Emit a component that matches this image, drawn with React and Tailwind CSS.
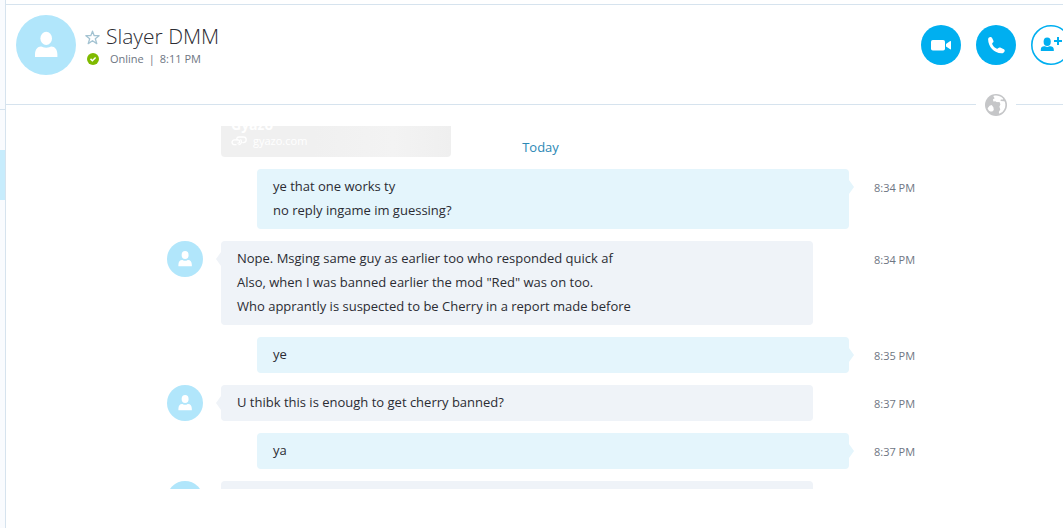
const MESSAGES = [
  { own: true, time: '8:34 PM', lines: ['ye that one works ty', 'no reply ingame im guessing?'] },
  {
    own: false,
    time: '8:34 PM',
    lines: [
      'Nope. Msging same guy as earlier too who responded quick af',
      'Also, when I was banned earlier the mod "Red" was on too.',
      'Who apprantly is suspected to be Cherry in a report made before',
    ],
  },
  { own: true, time: '8:35 PM', lines: ['ye'] },
  { own: false, time: '8:37 PM', lines: ['U thibk this is enough to get cherry banned?'] },
  { own: true, time: '8:37 PM', lines: ['ya'] },
  { own: false, time: '', lines: [''] },
];

function Avatar({ className }) {
  return (
    <svg viewBox="0 0 60 60" className={className} aria-hidden="true">
      <circle cx="30" cy="30" r="30" fill="#b1e6fb" />
      <ellipse cx="30.2" cy="23.4" rx="5.8" ry="6.6" fill="#fff" />
      <path d="M19 42v-2.500c0-5 2.500-8 6-8 1.500 0 2.500 1.300 5.200 1.300s3.700-1.300 5.200-1.300c3.500 0 6 3 6 8V42z" fill="#fff" />
    </svg>
  );
}

function StarIcon() {
  return (
    <svg viewBox="0 0 15 15" className="size-[15px]" aria-hidden="true">
      <path
        d="M7.500 1.200l1.700 4.500h4.900L10.300 8.700l1.500 4.900-4.300-2.900-4.300 2.900 1.500-4.900L.9 5.700h4.900z"
        fill="none"
        stroke="#a4c3d2"
        strokeWidth="1.300"
        strokeLinejoin="round"
      />
    </svg>
  );
}

function OnlineIcon() {
  return (
    <svg viewBox="0 0 12 12" className="size-3" aria-hidden="true">
      <circle cx="6" cy="6" r="6" fill="#7fba00" />
      <path d="M3.500 5.900l1.900 1.900 3.200-3.300" fill="none" stroke="#fff" strokeWidth="1.500" />
    </svg>
  );
}

function VideoIcon() {
  return (
    <svg viewBox="0 0 40 40" className="size-10" aria-hidden="true">
      <rect x="10" y="15" width="14" height="10.500" rx="1.800" fill="#fff" />
      <path d="M25 19l4.200-2.900c.5-.3.800-.1.800.4v7.400c0 .5-.3.700-.8.400L25 21.400z" fill="#fff" />
    </svg>
  );
}

function PhoneIcon() {
  return (
    <svg viewBox="0 0 40 40" className="size-10" aria-hidden="true">
      <path
        d="M12.100 14.200c.2-1.400 1.200-2.300 2.400-2.300.8 0 1.200.4 1.600 1.200l1.300 2.700c.3.800.1 1.300-.5 1.800-.8.700-.9 1.100-.5 1.900.9 1.900 2.200 3.200 4.100 4.100.8.400 1.200.3 1.900-.5.500-.6 1-.8 1.800-.5l3.100 1.300c1 .4 1.500.9 1.400 1.800-.1 1.400-1.400 2.600-3.200 2.600-7.500-.5-13.300-6.500-13.400-14.100z"
        fill="#fff"
      />
    </svg>
  );
}

function AddPersonIcon() {
  return (
    <svg viewBox="0 0 40 40" className="size-10" aria-hidden="true">
      <circle cx="20" cy="20" r="19.200" fill="#fff" stroke="#00aff0" strokeWidth="1.600" />
      <ellipse cx="16.200" cy="16.700" rx="3.600" ry="4.300" fill="#00aff0" />
      <path d="M9.800 26v-1.500c0-2.300 1.500-3.300 3.400-3.300 1 0 1.500.7 3 .7s2-.7 3-.7c1.900 0 3.600 1 3.600 3.300V26z" fill="#00aff0" />
      <path d="M23 16h8M27 12v8" stroke="#00aff0" strokeWidth="2" />
    </svg>
  );
}

function GlobeIcon() {
  return (
    <svg viewBox="0 0 22 22" className="size-[22px]" aria-hidden="true">
      <circle cx="11" cy="11" r="11" fill="#c5c6c8" />
      <path
        d="M8.300 2.100C11.500 1 15 1.800 17.800 4.200l.4 1.200-2.400.1-.3 1.500 3.900.2.6 1c1 3.500.1 7-2.600 9.800l-3.200 1.800-.4-1.900 1.500-2.500-.9-2.600 1-2.500-.9-2.300-2.600.2-1.500-.9-2 .3-.5-2.200 1.700-1.200z"
        fill="#fff"
      />
      <path d="M2.600 14.300l2-2.600 2.100-.7 1.700 2.300.4 2.700-1.500 1.400-2 .1c-1.400-.6-2.300-1.600-2.700-3.200z" fill="#fff" />
      <path d="M7.600 8.800l2-.9 3.400.5.600 2-1.300 2.200-.7 3.600-1.600-.6-.8-3.400z" fill="#c5c6c8" />
    </svg>
  );
}

function LinkIcon() {
  return (
    <svg viewBox="0 0 16 10" className="h-2.5 w-4" fill="none" stroke="#fff" strokeWidth="1.300" strokeLinecap="round" aria-hidden="true">
      <path d="M5 8.700H3.400a2.400 2.400 0 010-4.800h3.200c1.300 0 2 .7 2 1.800s-.7 1.500-1.600 1.500" />
      <path d="M6.200 3.900C5.200 2.300 6.200 1 8 1h4.400a2.800 2.800 0 010 5.600h-.6M9.800 3.800c1.200 1.500.7 4.300-1.800 4.900" />
    </svg>
  );
}

function Message({ own, time, lines }) {
  return (
    <li className="grid grid-cols-[54px_1fr_61px_40px]">
      <div>{!own && <Avatar className="size-9" />}</div>
      <div
        className={
          own
            ? 'relative -mr-9 ml-9 rounded bg-[#e4f5fc] px-4 pt-[5px] pb-[7px]'
            : 'relative rounded bg-[#eff3f8] px-4 pt-[5px] pb-[7px]'
        }
      >
        <svg
          viewBox="0 0 5 14"
          className={own ? 'absolute top-[11px] left-full h-3.5 w-[5px]' : 'absolute top-[11px] right-full h-3.5 w-[5px]'}
          aria-hidden="true"
        >
          {own ? <path d="M0 0l5 7-5 7z" fill="#e4f5fc" /> : <path d="M5 0L0 7l5 7z" fill="#eff3f8" />}
        </svg>
        {lines.map((line) => (
          <p key={line} className="h-6 text-[13px] leading-6 whitespace-nowrap text-[#2b2c33]">
            {line}
          </p>
        ))}
      </div>
      <div />
      <time className="pt-[7px] text-[11px] leading-6 whitespace-nowrap text-[#6e7683]">{time}</time>
    </li>
  );
}

export default function App() {
  return (
    <div className="flex h-screen overflow-hidden bg-white font-['Open_Sans','Noto_Sans',sans-serif]">
      <aside className="flex w-1.5 shrink-0 flex-col border-r border-[#d6e3ee] bg-[#f9fbfe]">
        <div className="h-[110px] border-b border-[#d6e3ee]" />
        <div className="mt-10 h-[50px] bg-[#c7ecfc]" />
      </aside>

      <main className="flex min-w-0 flex-1 flex-col pt-1">
        <header className="flex h-[89px] shrink-0 items-start border-t border-[#d6e3ee] pt-2.5 pl-2.5">
          <Avatar className="size-[60px] shrink-0" />
          <div className="pt-[7px] pl-[9px]">
            <div className="flex items-center gap-1.5">
              <button type="button" aria-label="Add to favorites" className="pt-0.5">
                <StarIcon />
              </button>
              <h1 className="text-[21px] leading-7 font-light text-[#2b2c33]">Slayer DMM</h1>
            </div>
            <p className="flex items-center gap-[5px] pt-px pl-0.5 text-[11px] leading-4 text-[#6e7683]">
              <OnlineIcon />
              <span className="pl-1.5">Online</span>
              <span>|</span>
              <span>8:11 PM</span>
            </p>
          </div>
          <nav className="-mr-2 ml-auto flex shrink-0 gap-[15px] pt-2.5">
            <button type="button" aria-label="Video call" className="rounded-full bg-[#00aff0]">
              <VideoIcon />
            </button>
            <button type="button" aria-label="Call" className="rounded-full bg-[#00aff0]">
              <PhoneIcon />
            </button>
            <button type="button" aria-label="Add people" className="rounded-full">
              <AddPersonIcon />
            </button>
          </nav>
        </header>

        <div className="flex shrink-0 items-center">
          <div className="h-px flex-1 bg-[#d6e3ee]" />
          <div className="px-[9px] pt-px">
            <GlobeIcon />
          </div>
          <div className="h-px w-[47px] bg-[#d6e3ee]" />
        </div>

        <section className="mt-[10px] mb-[39px] min-h-0 flex-1 overflow-hidden pl-3">
          <div className="mx-auto flex max-w-[747px] flex-col gap-3">
            <div className="grid">
              <a
                href="#gyazo"
                className="col-start-1 row-start-1 ml-[54px] flex h-[31px] w-[230px] flex-col justify-end overflow-hidden rounded-b bg-linear-to-r from-[#f0f0f0] from-40% via-[#f3f3f3] via-75% to-[#efefef] px-2.5 pb-2 text-white"
              >
                <span className="shrink-0 text-[14px] leading-4 font-bold">Gyazo</span>
                <span className="flex shrink-0 items-center gap-1.5 text-[11px] leading-4">
                  <LinkIcon />
                  gyazo.com
                </span>
              </a>
              <h2 className="col-start-1 row-start-1 justify-self-center pt-[11px] text-[13px] leading-5 text-[#2b88b5]">
                Today
              </h2>
            </div>
            <ol className="flex flex-col gap-3">
              {MESSAGES.map((message, index) => (
                <Message key={index} {...message} />
              ))}
            </ol>
          </div>
        </section>
      </main>
    </div>
  );
}
